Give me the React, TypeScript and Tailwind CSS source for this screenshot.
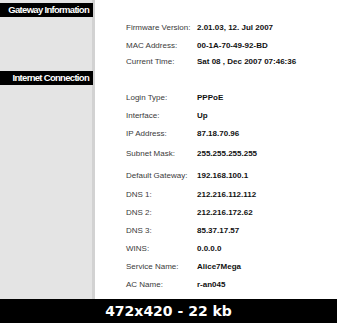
import React from 'react';

interface InfoRow {
  label: string;
  value: string;
  gap: string;
}

const rows: InfoRow[] = [
  { label: 'Firmware Version:', value: '2.01.03, 12. Jul 2007', gap: 'mt-[19px]' },
  { label: 'MAC Address:', value: '00-1A-70-49-92-BD', gap: 'mt-0' },
  { label: 'Current Time:', value: 'Sat 08 , Dec 2007 07:46:36', gap: 'mt-[-2px]' },
  { label: 'Login Type:', value: 'PPPoE', gap: 'mt-[18px]' },
  { label: 'Interface:', value: 'Up', gap: 'mt-0' },
  { label: 'IP Address:', value: '87.18.70.96', gap: 'mt-0' },
  { label: 'Subnet Mask:', value: '255.255.255.255', gap: 'mt-[2px]' },
  { label: 'Default Gateway:', value: '192.168.100.1', gap: 'mt-[4px]' },
  { label: 'DNS 1:', value: '212.216.112.112', gap: 'mt-[1px]' },
  { label: 'DNS 2:', value: '212.216.172.62', gap: 'mt-0' },
  { label: 'DNS 3:', value: '85.37.17.57', gap: 'mt-0' },
  { label: 'WINS:', value: '0.0.0.0', gap: 'mt-0' },
  { label: 'Service Name:', value: 'Alice7Mega', gap: 'mt-0' },
  { label: 'AC Name:', value: 'r-an045', gap: 'mt-0' },
];

const SectionBar: React.FC<{ title: string; className?: string }> = ({ title, className = '' }) => (
  <div className={`h-[14px] bg-black flex items-center justify-end pr-[4px] ${className}`}>
    <span className="text-white font-bold text-[9.5px] leading-none tracking-[-0.7px]">{title}</span>
  </div>
);

export default function App() {
  return (
    <div className="w-[337px] h-[323px] flex flex-col bg-white overflow-hidden font-['Liberation_Sans',Arial,sans-serif]">
      <div className="flex flex-1 min-h-0">
        <div className="w-[95px] shrink-0 bg-[#e4e4e4] border-r-[3px] border-[#d2d2d2] pt-[3px]">
          <SectionBar title="Gateway Information" className="mr-[-1px]" />
          <SectionBar title="Internet Connection" className="mt-[54px] mr-[-1px]" />
        </div>
        <div className="flex-1 flex flex-col pl-[31px]">
          {rows.map(row => (
            <div key={row.label} className={`h-[18px] flex items-center shrink-0 ${row.gap}`}>
              <span className="w-[71px] text-[8px] text-[#3a3a3a]">{row.label}</span>
              <span className="text-[8px] font-bold text-[#111]">{row.value}</span>
            </div>
          ))}
        </div>
      </div>
      <div className="h-[24px] bg-black flex items-center justify-center">
        <span className="text-white font-bold text-[14px] leading-none font-['DejaVu_Sans',sans-serif]">472x420 - 22 kb</span>
      </div>
    </div>
  );
}
